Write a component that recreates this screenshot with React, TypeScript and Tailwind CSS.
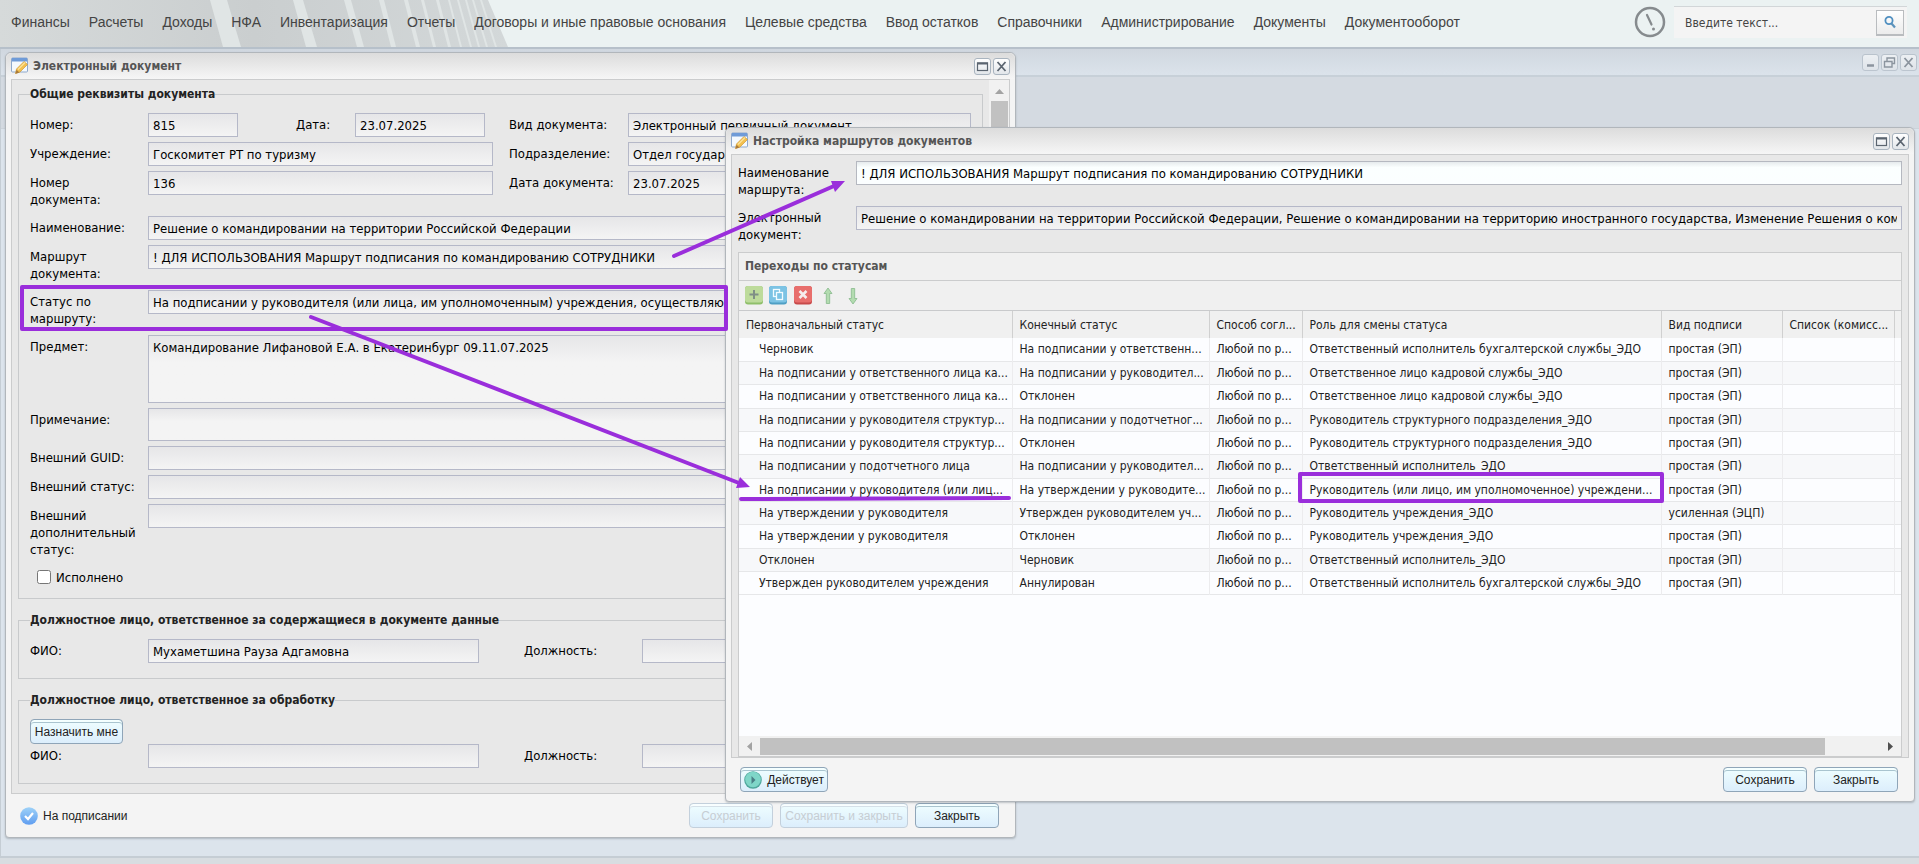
import React from 'react';
import clsx from 'clsx';

const menuItems = [
  'Финансы',
  'Расчеты',
  'Доходы',
  'НФА',
  'Инвентаризация',
  'Отчеты',
  'Договоры и иные правовые основания',
  'Целевые средства',
  'Ввод остатков',
  'Справочники',
  'Администрирование',
  'Документы',
  'Документооборот'
];

const columns = [
  'Первоначальный статус',
  'Конечный статус',
  'Способ согл...',
  'Роль для смены статуса',
  'Вид подписи',
  'Список (комисс...',
  ''
];

const routes = [
  ['Черновик', 'На подписании у ответственн...', 'Ответственный исполнитель бухгалтерской службы_ЭДО', 'простая (ЭП)'],
  ['На подписании у ответственного лица ка...', 'На подписании у руководител...', 'Ответственное лицо кадровой службы_ЭДО', 'простая (ЭП)'],
  ['На подписании у ответственного лица ка...', 'Отклонен', 'Ответственное лицо кадровой службы_ЭДО', 'простая (ЭП)'],
  ['На подписании у руководителя структур...', 'На подписании у подотчетног...', 'Руководитель структурного подразделения_ЭДО', 'простая (ЭП)'],
  ['На подписании у руководителя структур...', 'Отклонен', 'Руководитель структурного подразделения_ЭДО', 'простая (ЭП)'],
  ['На подписании у подотчетного лица', 'На подписании у руководител...', 'Ответственный исполнитель_ЭДО', 'простая (ЭП)'],
  ['На подписании у руководителя (или лиц...', 'На утверждении у руководите...', 'Руководитель (или лицо, им уполномоченное) учреждени...', 'простая (ЭП)'],
  ['На утверждении у руководителя', 'Утвержден руководителем уч...', 'Руководитель учреждения_ЭДО', 'усиленная (ЭЦП)'],
  ['На утверждении у руководителя', 'Отклонен', 'Руководитель учреждения_ЭДО', 'простая (ЭП)'],
  ['Отклонен', 'Черновик', 'Ответственный исполнитель_ЭДО', 'простая (ЭП)'],
  ['Утвержден руководителем учреждения', 'Аннулирован', 'Ответственный исполнитель бухгалтерской службы_ЭДО', 'простая (ЭП)']
];

// Top and bottom x of every light stripe in the header background
const stripes = [
  [210, 227, 223, 241],
  [293, 303, 306, 317],
  [344, 351, 357, 364],
  [379, 384, 391, 396],
  [404, 408, 416, 420],
  [421, 424, 433, 436],
  [436, 439, 448, 451],
  [448, 450, 460, 462],
  [457, 459, 470, 472],
  [465, 467, 478, 480],
  [472, 474, 486, 488],
  [480, 482, 495, 497]
];

const labelFont = 'font-["DejaVu_Sans_Condensed","DejaVu_Sans",sans-serif] text-[13px] leading-[17px] text-black';
const titleFont = 'font-["DejaVu_Sans_Condensed","DejaVu_Sans",sans-serif] text-xs font-bold';

type FieldProps = {
  id: string;
  label: string;
  value?: string;
  labelClass?: string;
  inputClass?: string;
  editable?: boolean;
};

const Field = ({ id, label, value = '', labelClass = 'w-[118px]', inputClass = 'flex-1', editable }: FieldProps) => (
  <>
    <label htmlFor={id} className={clsx('shrink-0 py-[3px] pr-2', labelFont, labelClass)}>
      {label}
    </label>
    <input
      id={id}
      readOnly={!editable}
      defaultValue={value}
      className={clsx(
        'h-6 min-w-0 border px-1 outline-none',
        labelFont,
        editable
          ? 'border-[#b5b8c0] bg-linear-to-b from-[#e6ebed] via-[#fbffff] via-25% to-[#fbfeff]'
          : 'border-[#b5b8c8] bg-linear-to-b from-[#e6e6e8] to-[#f4f4f4]',
        inputClass
      )}
    />
  </>
);

const Area = ({ id, label, value = '', heightClass }: { id: string; label: string; value?: string; heightClass: string }) => (
  <div className="flex items-start">
    <label htmlFor={id} className={clsx('w-[118px] shrink-0 py-[3px]', labelFont)}>
      {label}
    </label>
    <textarea
      id={id}
      readOnly
      defaultValue={value}
      className={clsx(
        'block min-w-0 flex-1 resize-none border border-[#b5b8c8] bg-linear-to-b from-[#e6e6e8] to-[#f4f4f4] to-40% px-1 py-[3px] outline-none',
        labelFont,
        heightClass
      )}
    />
  </div>
);

const Group = ({ title, children }: { title: string; children: React.ReactNode }) => (
  <fieldset className="border border-[#c8cacc] px-[11px] pt-[10px] pb-[15px]">
    <legend className={clsx('leading-[18px] text-[#222]', titleFont)}>{title}</legend>
    {children}
  </fieldset>
);

const Button = ({
  children,
  className,
  disabled
}: {
  children: React.ReactNode;
  className?: string;
  disabled?: boolean;
}) => (
  <button
    disabled={disabled}
    className={clsx(
      'flex h-[25px] items-center justify-center rounded border bg-linear-to-b from-[#effeff] to-[#dceefc] font-["Liberation_Sans",sans-serif] text-xs whitespace-nowrap',
      disabled
        ? 'border-[#c3d0dc] text-[#c6cdd3] shadow-[inset_0_2px_0_#f8feff,inset_0_3px_0_#d5e0e8]'
        : 'border-[#8fa5b8] text-[#222] shadow-[inset_0_2px_0_#f4ffff,inset_0_3px_0_#a9c4cf]',
      className
    )}
  >
    {children}
  </button>
);

const ToolButton = ({ label, faded, children }: { label: string; faded?: boolean; children: React.ReactNode }) => (
  <button
    aria-label={label}
    className={clsx(
      'flex size-[17px] items-center justify-center rounded-[3px] border border-[#a9b4bf] bg-linear-to-b from-white to-[#e2e6ea]',
      faded && 'opacity-60'
    )}
  >
    <svg width="13" height="13" viewBox="0 0 13 13" fill="none" stroke="#5b6570" strokeWidth="1.6">
      {children}
    </svg>
  </button>
);

const MaximizeIcon = () => (
  <>
    <rect x="1.5" y="3" width="10" height="7.5" strokeWidth="1.2" />
    <path d="M1 3.5h11" strokeWidth="2" />
  </>
);

const CloseIcon = () => <path d="M2.5 2l8 9M10.5 2l-8 9" strokeWidth="1.8" />;

const WindowIcon = () => (
  <svg width="18" height="18" viewBox="0 0 18 18" className="shrink-0">
    <rect x="0.5" y="1" width="16" height="14" rx="1" fill="#f4f9fe" stroke="#8fa9cc" />
    <rect x="1" y="1" width="15" height="3.5" fill="#6f9bd8" />
    <path d="M4.5 16.5l1-4.5L13 4.5l3.5 3L9 15z" fill="#f3c04f" stroke="#d09a35" strokeWidth="0.7" />
    <path d="M7 12.5l7-7" stroke="#fbe39c" strokeWidth="1.3" />
    <path d="M4.5 16.8l1-4 3 2.6z" fill="#a87a3c" />
  </svg>
);

type WindowProps = {
  title: string;
  className: string;
  footer: React.ReactNode;
  children: React.ReactNode;
};

const Window = ({ title, className, footer, children }: WindowProps) => (
  <section
    className={clsx(
      'absolute rounded-t-md rounded-b-sm border border-[#b1b6bb] bg-[#f4f4f4] px-[5px] shadow-[0_1px_2px_rgba(90,100,110,0.35)]',
      className
    )}
  >
    <header className="-mx-[5px] flex h-[26px] items-center rounded-t-md bg-linear-to-b from-[#dcdcdc] to-[#f6f6f6] px-[5px]">
      <WindowIcon />
      <h2 className={clsx('ml-1 flex-1 text-[#555]', titleFont)}>{title}</h2>
      <div className="flex gap-0.5">
        <ToolButton label="Развернуть">
          <MaximizeIcon />
        </ToolButton>
        <ToolButton label="Закрыть окно">
          <CloseIcon />
        </ToolButton>
      </div>
    </header>
    <div className="border border-[#cbcccd] bg-[#e8e8e8]">{children}</div>
    <footer className="flex h-[43px] items-center">{footer}</footer>
  </section>
);

const DocumentWindow = () => (
  <Window
    title="Электронный документ"
    className="top-[52px] left-[5px] w-[1011px]"
    footer={
      <>
        <svg width="18" height="18" viewBox="0 0 18 18" className="ml-[9px]">
          <defs>
            <linearGradient id="check" x1="0" y1="0" x2="0" y2="1">
              <stop offset="0" stopColor="#9ed2f8" />
              <stop offset="1" stopColor="#5f9df0" />
            </linearGradient>
          </defs>
          <circle cx="9" cy="9" r="8.8" fill="url(#check)" />
          <path d="M5 9l3 3 5-6" fill="none" stroke="#fff" strokeWidth="2.2" />
        </svg>
        <span className='ml-[5px] font-["Liberation_Sans",sans-serif] text-xs text-[#222]'>На подписании</span>
        <div className="mr-[11px] ml-auto flex gap-[7px]">
          <Button disabled className="w-[84px]">Сохранить</Button>
          <Button disabled className="w-[128px]">Сохранить и закрыть</Button>
          <Button className="w-[84px]">Закрыть</Button>
        </div>
      </>
    }
  >
    <div className="flex">
      <div className="flex min-w-0 flex-1 flex-col gap-3 px-[6px] pt-[5px] pb-[9px]">
        <Group title="Общие реквизиты документа">
          <div className="-mb-[5px] flex flex-col gap-[5px]">
            <div className="flex items-start">
              <div className="mr-4 flex w-[463px]">
                <Field id="number" label="Номер:" value="815" inputClass="w-[90px]" />
                <div className="ml-[58px] flex">
                  <Field id="date" label="Дата:" value="23.07.2025" labelClass="w-[59px]" inputClass="w-[130px]" />
                </div>
              </div>
              <Field id="kind" label="Вид документа:" value="Электронный первичный документ" labelClass="w-[119px]" />
            </div>
            <div className="flex items-start">
              <div className="mr-4 flex w-[463px]">
                <Field id="org" label="Учреждение:" value="Госкомитет РТ по туризму" />
              </div>
              <Field id="dept" label="Подразделение:" value="Отдел государс" labelClass="w-[119px]" />
            </div>
            <div className="flex items-start">
              <div className="mr-4 flex w-[463px] items-start">
                <Field id="docnum" label="Номер документа:" value="136" />
              </div>
              <Field id="docdate" label="Дата документа:" value="23.07.2025" labelClass="w-[119px]" />
            </div>
            <div className="flex items-start">
              <Field id="name" label="Наименование:" value="Решение о командировании на территории Российской Федерации" />
            </div>
            <div className="flex items-start">
              <Field id="route" label="Маршрут документа:" value="! ДЛЯ ИСПОЛЬЗОВАНИЯ Маршрут подписания по командированию СОТРУДНИКИ" />
            </div>
            <div className="flex items-start">
              <Field
                id="status"
                label="Статус по маршруту:"
                value="На подписании у руководителя (или лица, им уполномоченным) учреждения, осуществляю"
              />
            </div>
            <Area id="subject" label="Предмет:" value="Командирование Лифановой Е.А. в Екатеринбург 09.11.07.2025" heightClass="h-[68px]" />
            <Area id="note" label="Примечание:" heightClass="h-[33px]" />
            <div className="flex items-start">
              <Field id="guid" label="Внешний GUID:" />
            </div>
            <div className="flex items-start">
              <Field id="extstatus" label="Внешний статус:" />
            </div>
            <div className="flex items-start">
              <Field id="extstatus2" label="Внешний дополнительный статус:" />
            </div>
            <div className="flex h-[22px] items-center gap-[5px] pl-[7px]">
              <input id="done" type="checkbox" className="size-[14px]" />
              <label htmlFor="done" className={labelFont}>Исполнено</label>
            </div>
          </div>
        </Group>
        <Group title="Должностное лицо, ответственное за содержащиеся в документе данные">
          <div className="flex items-start">
            <Field id="fio1" label="ФИО:" value="Мухаметшина Рауза Адгамовна" inputClass="mr-[45px] w-[331px]" />
            <Field id="post1" label="Должность:" />
          </div>
        </Group>
        <Group title="Должностное лицо, ответственное за обработку">
          <Button className="w-[93px]">Назначить мне</Button>
          <div className="flex items-start">
            <Field id="fio2" label="ФИО:" inputClass="mr-[45px] w-[331px]" />
            <Field id="post2" label="Должность:" />
          </div>
        </Group>
      </div>
      <div className="flex w-5 flex-col items-center bg-[#f1f1f1]">
        <svg width="17" height="21" viewBox="0 0 17 21">
          <path d="M4 14h9L8.500 9z" fill="#a3a3a3" />
        </svg>
        <div className="h-[400px] w-[17px] bg-[#c1c1c1]" />
      </div>
    </div>
  </Window>
);

const gridFont = 'font-["DejaVu_Sans_Condensed","DejaVu_Sans",sans-serif] text-xs';

const RouteGrid = () => (
  <div className="h-[425px] overflow-hidden bg-[#fcfdff]">
    <table className={clsx('w-full table-fixed border-collapse text-left text-[#222]', gridFont)}>
      <colgroup>
        <col className="w-[273px]" />
        <col className="w-[197px]" />
        <col className="w-[93px]" />
        <col />
        <col className="w-[121px]" />
        <col className="w-[112px]" />
        <col className="w-[7px]" />
      </colgroup>
      <thead className="bg-[#f0f0f0]">
        <tr className="h-[27px]">
          {columns.map((c) => (
            <th key={c} className="overflow-hidden border-r border-[#d0d0d0] pl-[7px] font-normal whitespace-nowrap last:border-r-0">
              {c}
            </th>
          ))}
        </tr>
      </thead>
      <tbody>
        {routes.map((r, i) => (
          <tr key={i} className="h-[23px] border-b border-[#e6e7e9] even:bg-[#f7f8fa] nth-[3n]:h-6">
            <td className="overflow-hidden border-r border-[#ececee] pl-5 whitespace-nowrap">{r[0]}</td>
            <td className="overflow-hidden border-r border-[#ececee] pl-[7px] whitespace-nowrap">{r[1]}</td>
            <td className="overflow-hidden border-r border-[#ececee] pl-[7px] whitespace-nowrap">Любой по р...</td>
            <td className="overflow-hidden border-r border-[#ececee] pl-[7px] whitespace-nowrap">{r[2]}</td>
            <td className="overflow-hidden border-r border-[#ececee] pl-[7px] whitespace-nowrap">{r[3]}</td>
            <td className="border-r border-[#ececee]" />
            <td />
          </tr>
        ))}
      </tbody>
    </table>
  </div>
);

const GridToolbar = () => (
  <div className="flex h-[30px] items-center border-b border-[#c9cacc] bg-[#f0f0f0] pl-[6px]">
    <button aria-label="Добавить" className="mr-[6px]">
      <svg width="18" height="19" viewBox="0 0 18 19" className="block">
        <rect width="18" height="18.500" rx="3" fill="#8fbf6a" />
        <rect width="18" height="16.500" rx="3" fill="#bddb9b" />
        <path d="M9 4v9M4.500 8.500h9" stroke="#7f8f86" strokeWidth="2" />
      </svg>
    </button>
    <button aria-label="Копировать" className="mr-[7px]">
      <svg width="18" height="19" viewBox="0 0 18 19" className="block">
        <rect width="18" height="18.500" rx="3" fill="#4f9fc4" />
        <rect width="18" height="16.500" rx="3" fill="#7cc3e4" />
        <g fill="#7cc3e4" stroke="#f2fbff" strokeWidth="1.300">
          <rect x="4.500" y="3.500" width="6" height="7" />
          <rect x="7.500" y="6.500" width="6" height="7" />
        </g>
      </svg>
    </button>
    <button aria-label="Удалить" className="mr-[11px]">
      <svg width="18" height="19" viewBox="0 0 18 19" className="block">
        <rect width="18" height="18.500" rx="3" fill="#c74a4a" />
        <rect width="18" height="16.500" rx="3" fill="#e86e6c" />
        <path d="M5.500 5l7 7M12.500 5l-7 7" stroke="#f6eeee" strokeWidth="2.600" />
      </svg>
    </button>
    <button aria-label="Вверх" className="mr-[15px]">
      <svg width="10" height="18" viewBox="0 0 10 18" className="block">
        <path d="M5 1l4 5.500H6.700V16.500H3.300V6.500H1z" fill="#b3dcb0" stroke="#86b98a" strokeWidth="0.800" />
      </svg>
    </button>
    <button aria-label="Вниз">
      <svg width="10" height="18" viewBox="0 0 10 18" className="block">
        <path d="M5 17l4-5.500H6.700V1.500H3.300V11.500H1z" fill="#b3dcb0" stroke="#86b98a" strokeWidth="0.800" />
      </svg>
    </button>
  </div>
);

const RouteWindow = () => (
  <Window
    title="Настройка маршрутов документов"
    className="top-[127px] right-1 left-[725px]"
    footer={
      <>
        <Button className="ml-[9px] w-[88px] gap-[5px]">
          <svg width="18" height="18" viewBox="0 0 18 18" className="shrink-0">
            <circle cx="9" cy="9" r="8.800" fill="#4fa79c" />
            <circle cx="9" cy="8.500" r="7.800" fill="#7fd6c8" />
            <path d="M7.500 5l4 4-4 4z" fill="#4a7f86" />
          </svg>
          Действует
        </Button>
        <div className="mr-[11px] ml-auto flex gap-[7px]">
          <Button className="w-[84px]">Сохранить</Button>
          <Button className="w-[84px]">Закрыть</Button>
        </div>
      </>
    }
  >
    <div className="px-[6px] pt-[6px]">
      <div className="mb-[5px] flex items-start">
        <Field
          id="routename"
          label="Наименование маршрута:"
          value="! ДЛЯ ИСПОЛЬЗОВАНИЯ Маршрут подписания по командированию СОТРУДНИКИ"
          editable
        />
      </div>
      <div className="flex items-start">
        <Field
          id="routedoc"
          label="Электронный документ:"
          value="Решение о командировании на территории Российской Федерации, Решение о командировании на территорию иностранного государства, Изменение Решения о командировании"
        />
      </div>
      <div className="mt-[6px] border border-[#cbcccd]">
        <h3 className={clsx('h-7 border-b border-[#cbcccd] bg-[#f0f0f0] pl-[6px] leading-[27px] text-[#555]', titleFont)}>
          Переходы по статусам
        </h3>
        <GridToolbar />
        <RouteGrid />
        <div className="flex h-5 items-center bg-[#f1f1f1]">
          <svg width="21" height="17" viewBox="0 0 21 17">
            <path d="M13 4v9L8 8.500z" fill="#a3a3a3" />
          </svg>
          <div className="h-[17px] flex-1 bg-[#c1c1c1]" />
          <svg width="76" height="17" viewBox="0 0 76 17">
            <path d="M63 4v9l5-4.500z" fill="#505050" />
          </svg>
        </div>
      </div>
    </div>
  </Window>
);

const TopBar = () => (
  <header className="relative flex h-[49px] items-center border-b-2 border-[#b6c0ca] bg-[#ebf2f2] pr-3 pb-[3px]">
    <svg width="520" height="47" viewBox="0 0 520 47" className="absolute top-0 left-0">
      <defs>
        <linearGradient id="bar" x1="0" x2="1" y1="0" y2="0">
          <stop offset="0" stopColor="#d6dada" />
          <stop offset="0.500" stopColor="#cacecf" />
          <stop offset="1" stopColor="#d3d8d9" />
        </linearGradient>
      </defs>
      <path d="M0 0H488L508 47H0z" fill="url(#bar)" />
      {stripes.map(([a, b, c, d]) => (
        <path key={a} d={`M${a} 0H${b}L${d} 47H${c}z`} fill="#e0e5e5" />
      ))}
    </svg>
    <nav className='relative flex flex-1 gap-[19px] pl-[11px] font-["Liberation_Sans",sans-serif] text-sm text-[#444]'>
      {menuItems.map((item) => (
        <a key={item} href="#" className="whitespace-nowrap">
          {item}
        </a>
      ))}
    </nav>
    <svg width="32" height="32" viewBox="0 0 32 32" className="mr-2">
      <circle cx="16" cy="16" r="14" fill="none" stroke="#868b8e" strokeWidth="2.500" />
      <path d="M13 9l4.500 9.500" stroke="#868b8e" strokeWidth="2.200" strokeLinecap="round" />
      <circle cx="19.500" cy="23" r="1.500" fill="#868b8e" />
    </svg>
    <div className="flex h-8 w-[233px] items-center border-t border-[#d2d6d8] bg-[#f4f4f4] pr-[3px] pl-[11px]">
      <input
        aria-label="Поиск"
        placeholder="Введите текст..."
        className={clsx('min-w-0 flex-1 outline-none placeholder:text-[#444]', gridFont)}
      />
      <button aria-label="Найти" className="flex h-[26px] w-7 items-center justify-center border border-b-2 border-[#b9bcbf] bg-linear-to-b from-white to-[#ececec]">
        <svg width="14" height="14" viewBox="0 0 14 14" fill="none">
          <circle cx="6" cy="5.500" r="3.600" stroke="#4f8fc0" strokeWidth="1.800" />
          <path d="M8.500 8.500l3.500 4" stroke="#5d93bb" strokeWidth="2.200" />
        </svg>
      </button>
    </div>
  </header>
);

// Arrows and frames drawn over both windows
const Marks = () => (
  <svg width="1919" height="864" viewBox="0 0 1919 864" className="pointer-events-none absolute top-0 left-0" fill="none" stroke="#9a2edb" strokeWidth="4" strokeLinecap="round" strokeLinejoin="round">
    <rect x="22" y="287" width="704" height="42" />
    <rect x="1300" y="474" width="362" height="27" />
    <path d="M741 499L1009 498" />
    <path d="M674 256L834 186M311 317L739 483" />
    <path d="M845 181l-10 11-4-11zM750 487l-14 1 4-11z" fill="#9a2edb" stroke="none" />
  </svg>
);

export default function App() {
  return (
    <div className="relative flex min-h-screen flex-col overflow-hidden bg-[#d8dde1]">
      <TopBar />
      <main className="mb-[6px] flex flex-1 flex-col border-b-2 border-l border-[#c5cdd4] bg-[#dce4ec]">
        <div className="flex h-7 items-center justify-end gap-0.5 border-b-2 border-[#c7d0d8] bg-linear-to-b from-[#d0d7df] to-[#dbe3eb] pr-0.5">
          <ToolButton label="Свернуть" faded>
            <path d="M3 9.500h7" strokeWidth="2.500" />
          </ToolButton>
          <ToolButton label="Восстановить" faded>
            <path d="M4 5V2h7.500v5.500H9M1.500 5.500H9V11H1.500z" strokeWidth="1.400" />
          </ToolButton>
          <ToolButton label="Закрыть вкладку" faded>
            <CloseIcon />
          </ToolButton>
        </div>
        <div className="h-[52px] border-b border-[#ccd3da] bg-[#d4dae1]" />
      </main>
      <DocumentWindow />
      <RouteWindow />
      <Marks />
    </div>
  );
}
